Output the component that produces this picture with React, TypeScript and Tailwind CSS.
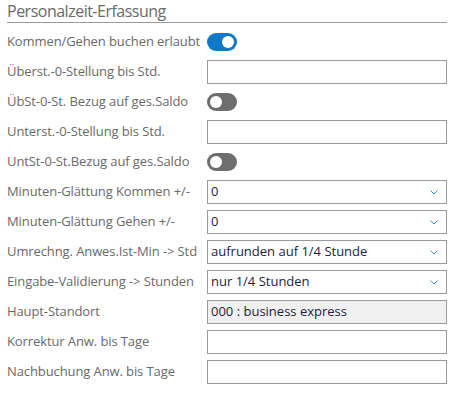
import React from "react";

type Row =
  | { label: string; kind: "toggle"; on: boolean }
  | { label: string; kind: "input"; value?: string; disabled?: boolean }
  | { label: string; kind: "select"; value: string };

const rows: Row[] = [
  { label: "Kommen/Gehen buchen erlaubt", kind: "toggle", on: true },
  { label: "Überst.-0-Stellung bis Std.", kind: "input" },
  { label: "ÜbSt-0-St. Bezug auf ges.Saldo", kind: "toggle", on: false },
  { label: "Unterst.-0-Stellung bis Std.", kind: "input" },
  { label: "UntSt-0-St.Bezug auf ges.Saldo", kind: "toggle", on: false },
  { label: "Minuten-Glättung Kommen +/-", kind: "select", value: "0" },
  { label: "Minuten-Glättung Gehen +/-", kind: "select", value: "0" },
  { label: "Umrechng. Anwes.Ist-Min -> Std", kind: "select", value: "aufrunden auf 1/4 Stunde" },
  { label: "Eingabe-Validierung -> Stunden", kind: "select", value: "nur 1/4 Stunden" },
  { label: "Haupt-Standort", kind: "input", value: "000 : business express", disabled: true },
  { label: "Korrektur Anw. bis Tage", kind: "input" },
  { label: "Nachbuchung Anw. bis Tage", kind: "input" },
];

const Toggle = ({ on }: { on: boolean }) => (
  <div
    className={`flex items-center w-[30px] h-[18px] rounded-full px-[3px] ${
      on ? "bg-[#0f78c8] justify-end" : "bg-[#6e6e6e] justify-start"
    }`}
  >
    <div className="w-[12px] h-[12px] rounded-full bg-white" />
  </div>
);

const Chevron = () => (
  <svg width="8" height="5" viewBox="0 0 8 5" className="shrink-0">
    <path d="M0.5 0.5 L4 4 L7.5 0.5" fill="none" stroke="#3d8fd6" strokeWidth="1" />
  </svg>
);

export default function App() {
  return (
    <div
      className="w-[455px] h-[396px] bg-white pl-[7px] pt-[1px] text-[13px] text-[#696969]"
      style={{ fontFamily: '"Open Sans", "Noto Sans", sans-serif' }}
    >
      <div className="w-[440px]">
        <h2 className="text-[16px] leading-[21px] tracking-[-0.5px] text-[#696969] border-b border-[#9a9a9a]">
          Personalzeit-Erfassung
        </h2>
        <div className="mt-[7px] flex flex-col gap-[6px]">
          {rows.map((r) => (
            <div key={r.label} className="flex items-center h-[24px]">
              <span className="w-[200px] shrink-0 whitespace-nowrap tracking-[-0.1px]">{r.label}</span>
              {r.kind === "toggle" && <Toggle on={r.on} />}
              {r.kind === "input" && (
                <div
                  className={`w-[240px] h-[24px] border border-[#9a9a9a] flex items-center px-[3px] text-[#1c1c3c] ${
                    r.disabled ? "bg-[#f0f0f0]" : "bg-white"
                  }`}
                >
                  {r.value}
                </div>
              )}
              {r.kind === "select" && (
                <div className="w-[240px] h-[24px] border border-[#9a9a9a] bg-white flex items-center justify-between pl-[3px] pr-[8px] text-[#1c1c3c]">
                  <span>{r.value}</span>
                  <Chevron />
                </div>
              )}
            </div>
          ))}
        </div>
      </div>
    </div>
  );
}
